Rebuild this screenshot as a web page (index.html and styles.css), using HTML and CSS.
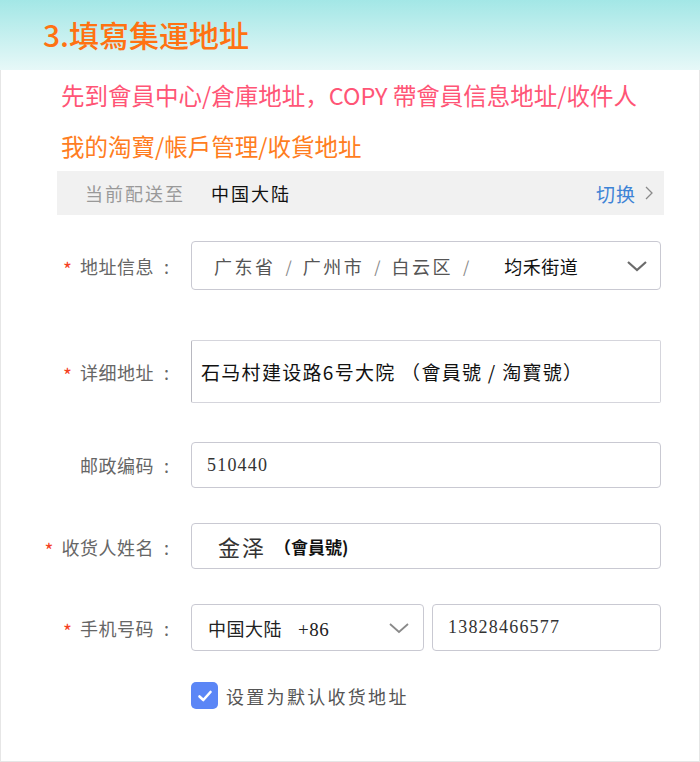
FILE: index.html
```html
<!DOCTYPE html>
<html lang="zh">
<head>
<meta charset="utf-8">
<link rel="stylesheet" href="styles.css">
</head>
<body>
<div class="header"><h1 class="title">3.填寫集運地址</h1></div>
<div class="panel">
  <p class="notice notice-pink">先到會員中心/倉庫地址，COPY 帶會員信息地址/收件人</p>
  <p class="notice notice-orange">我的淘寶/帳戶管理/收貨地址</p>
  <div class="shipbar">
    <span class="ship-label">当前配送至</span>
    <span class="ship-value">中国大陆</span>
    <span class="ship-switch">切换
      <svg class="ship-chev" width="10" height="16" viewBox="0 0 10 16"><path d="M2 2 L8 8 L2 14" fill="none" stroke="#8a8a8a" stroke-width="1.3"/></svg>
    </span>
  </div>

  <div class="row row-addr">
    <div class="label"><span class="req">*</span>地址信息<span class="colon">:</span></div>
    <div class="field field-select">
      <span class="region">广东省</span><span class="sep">/</span>
      <span class="region">广州市</span><span class="sep">/</span>
      <span class="region">白云区</span><span class="sep">/</span>
      <span class="street">均禾街道</span>
      <svg class="chev" width="22" height="12" viewBox="0 0 22 12"><path d="M2 2 L11 10 L20 2" fill="none" stroke="#6b6b6b" stroke-width="2.2"/></svg>
    </div>
  </div>

  <div class="row row-detail">
    <div class="label"><span class="req">*</span>详细地址<span class="colon">:</span></div>
    <div class="field field-area">石马村建设路6号大院 （會員號 / 淘寶號）</div>
  </div>

  <div class="row row-zip">
    <div class="label">邮政编码<span class="colon">:</span></div>
    <div class="field field-input"><span class="digits">510440</span></div>
  </div>

  <div class="row row-name">
    <div class="label"><span class="req">*</span>收货人姓名<span class="colon">:</span></div>
    <div class="field field-input"><span class="name">金泽</span><span class="name-note">（會員號)</span></div>
  </div>

  <div class="row row-phone">
    <div class="label"><span class="req">*</span>手机号码<span class="colon">:</span></div>
    <div class="phone-group">
      <div class="field field-country">
        <span class="country">中国大陆<span class="code">+86</span></span>
        <svg class="chev" width="22" height="12" viewBox="0 0 22 12"><path d="M2 2 L11 10 L20 2" fill="none" stroke="#8a8a8a" stroke-width="1.8"/></svg>
      </div>
      <div class="field field-phone"><span class="digits">13828466577</span></div>
    </div>
  </div>

  <div class="check-row">
    <span class="checkbox">
      <svg width="16" height="14" viewBox="0 0 16 14"><path d="M2.5 7.5 L6.3 11 L13.5 3" fill="none" stroke="#fff" stroke-width="2.6" stroke-linecap="round" stroke-linejoin="round"/></svg>
    </span>
    <span class="check-label">设置为默认收货地址</span>
  </div>
</div>
</body>
</html>
```
FILE: styles.css
```css
* { box-sizing: border-box; }
html, body { margin: 0; padding: 0; background: #fff; }
body {
  width: 700px;
  height: 762px;
  font-family: "Noto Sans CJK SC", "Noto Sans", sans-serif;
  overflow: hidden;
}
.header {
  height: 70px;
  background: linear-gradient(to bottom, #a3e7e6 0%, #e7f8f8 100%);
  padding-left: 43px;
  display: flex;
  align-items: center;
}
.title {
  margin: 0;
  font-size: 30px;
  font-weight: 500;
  color: #ff7213;
  line-height: 1;
  padding-bottom: 3px;
}
.panel {
  height: 692px;
  border: 1px solid #e6e6e6;
  border-top: none;
  padding-top: 9px;
}
.notice {
  margin: 0;
  padding-left: 60px;
  font-size: 23.5px;
  line-height: 32px;
}
.notice-pink { color: #ff5576; }
.notice-orange { color: #ff7d21; margin-top: 19px; }
.shipbar {
  margin: 9px 35px 0 56px;
  height: 44px;
  background: #f1f1f1;
  display: flex;
  align-items: center;
  padding: 0 10px 0 28px;
  font-size: 18px;
}
.ship-label { color: #999; letter-spacing: 2px; }
.ship-value { color: #111; margin-left: 26px; letter-spacing: 2px; }
.ship-switch {
  margin-left: auto;
  color: #3d83d6;
  font-size: 19px;
  letter-spacing: 1px;
  display: flex;
  align-items: center;
  gap: 8px;
}
.row {
  display: flex;
  align-items: center;
}
.label {
  width: 168px;
  flex: none;
  text-align: right;
  font-size: 18px;
  color: #666;
  letter-spacing: 0.5px;
  margin-right: 22px;
  white-space: nowrap;
}
.colon { margin-left: 10px; letter-spacing: 0; }
.req {
  color: #f5411f;
  font-size: 19px;
  margin-right: 8px;
  letter-spacing: 0;
  position: relative;
  top: 3px;
}
.field {
  border: 1px solid #c9c9d2;
  border-radius: 4px;
  background: #fff;
  display: flex;
  align-items: center;
}
.field-select {
  width: 470px;
  height: 49px;
  padding: 0 12px 0 22px;
  font-size: 18px;
}
.row-addr { margin-top: 26px; }
.region { color: #555; letter-spacing: 2.5px; }
.sep { color: #888; margin: 0 11px 0 10px; font-size: 16px; }
.street { color: #111; margin-left: 24px; letter-spacing: 0.5px; }
.chev { margin-left: auto; }
.row-detail { margin-top: 50px; }
.field-area {
  width: 470px;
  height: 63px;
  border-radius: 2px;
  border-color: #d5d5dc;
  border-left-color: #b8b8c0;
  padding-left: 9px;
  font-size: 19px;
  letter-spacing: 1.3px;
  color: #111;
}
.row-zip { margin-top: 39px; }
.field-input {
  width: 470px;
  height: 46px;
  padding-left: 15px;
}
.digits {
  font-family: "Liberation Serif", "DejaVu Serif", serif;
  font-size: 18px;
  letter-spacing: 1.2px;
  color: #333;
}
.row-name { margin-top: 35px; }
.row-name .field-input { padding-left: 26px; }
.name { font-size: 22px; color: #333; letter-spacing: 2px; }
.name-note { font-size: 17px; font-weight: 700; color: #111; margin-left: 8px; }
.row-phone { margin-top: 35px; }
.phone-group { display: flex; gap: 8px; }
.field-country {
  width: 233px;
  height: 47px;
  padding: 0 13px 0 16px;
  font-size: 18px;
  color: #222;
  letter-spacing: 0.5px;
}
.code {
  font-family: "Liberation Serif", "DejaVu Serif", serif;
  font-size: 19px;
  margin-left: 16px;
  letter-spacing: 0.5px;
}
.field-phone {
  width: 229px;
  height: 47px;
  padding-left: 15px;
}
.check-row {
  margin: 31px 0 0 190px;
  display: flex;
  align-items: center;
}
.checkbox {
  width: 27px;
  height: 27px;
  border-radius: 5px;
  background: #5b86f6;
  display: flex;
  align-items: center;
  justify-content: center;
}
.check-label {
  margin-left: 8px;
  font-size: 18px;
  color: #555;
  letter-spacing: 2.3px;
}
```
